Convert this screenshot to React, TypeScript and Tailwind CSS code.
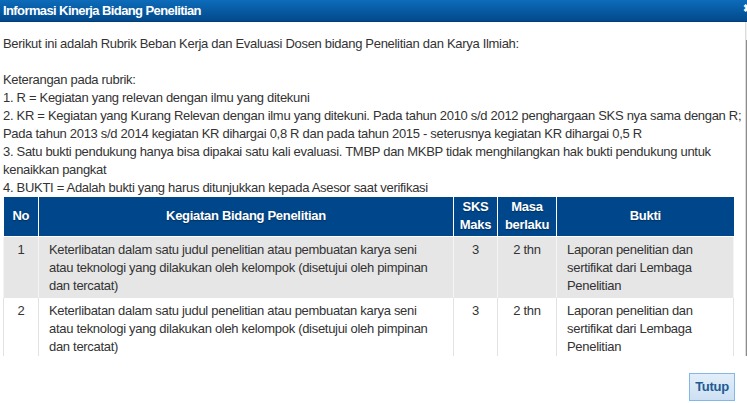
import React from "react";

const rows = [
  {
    no: "1",
    kegiatan:
      "Keterlibatan dalam satu judul penelitian atau pembuatan karya seni atau teknologi yang dilakukan oleh kelompok (disetujui oleh pimpinan dan tercatat)",
    sks: "3",
    masa: "2 thn",
    bukti: "Laporan penelitian dan sertifikat dari Lembaga Penelitian",
  },
  {
    no: "2",
    kegiatan:
      "Keterlibatan dalam satu judul penelitian atau pembuatan karya seni atau teknologi yang dilakukan oleh kelompok (disetujui oleh pimpinan dan tercatat)",
    sks: "3",
    masa: "2 thn",
    bukti: "Laporan penelitian dan sertifikat dari Lembaga Penelitian",
  },
];

export default function App() {
  return (
    <div className="w-[747px] h-[403px] overflow-hidden bg-white flex flex-col font-['Liberation_Sans',Arial,sans-serif] text-[13px] leading-[18px] tracking-[-0.3px] text-[#333]">
      {/* title bar */}
      <div className="h-[22px] shrink-0 flex items-center justify-between pl-[3px] bg-gradient-to-b from-[#0d6cba] to-[#03498c] border-b border-[#023d77]">
        <span className="font-bold text-white tracking-[-0.6px]">Informasi Kinerja Bidang Penelitian</span>
        <span className="text-white font-bold text-[11px] leading-none -mr-[5px] -mt-[4px]">✖</span>
      </div>

      {/* scrolling body */}
      <div className="h-[334px] shrink-0 flex">
        <div className="w-[745px] overflow-hidden pl-[3px] pt-[13px]">
          <div className="w-[742px]">
            <p>Berikut ini adalah Rubrik Beban Kerja dan Evaluasi Dosen bidang Penelitian dan Karya Ilmiah:</p>
            <br />
            <p>Keterangan pada rubrik:</p>
            <p>1. R = Kegiatan yang relevan dengan ilmu yang ditekuni</p>
            <p>
              2. KR = Kegiatan yang Kurang Relevan dengan ilmu yang ditekuni. Pada tahun 2010 s/d 2012 penghargaan SKS nya sama dengan R;
              <br />
              Pada tahun 2013 s/d 2014 kegiatan KR dihargai 0,8 R dan pada tahun 2015 - seterusnya kegiatan KR dihargai 0,5 R
            </p>
            <p>3. Satu bukti pendukung hanya bisa dipakai satu kali evaluasi. TMBP dan MKBP tidak menghilangkan hak bukti pendukung untuk kenaikkan pangkat</p>
            <p>4. BUKTI = Adalah bukti yang harus ditunjukkan kepada Asesor saat verifikasi</p>
          </div>

          <table className="w-[730px] table-fixed border-collapse">
            <colgroup>
              <col className="w-[35px]" />
              <col className="w-[415px]" />
              <col className="w-[44px]" />
              <col className="w-[59px]" />
              <col className="w-[177px]" />
            </colgroup>
            <thead>
              <tr className="bg-[#00468a] text-white font-bold [text-shadow:0_1px_1px_#00305f]">
                <th className="h-[39px] border border-white border-t-0 border-l-0 text-center">No</th>
                <th className="border border-white border-t-0 text-center">Kegiatan Bidang Penelitian</th>
                <th className="border border-white border-t-0 text-center">SKS<br />Maks</th>
                <th className="border border-white border-t-0 text-center">Masa<br />berlaku</th>
                <th className="border border-white border-t-0 border-r-0 text-center">Bukti</th>
              </tr>
            </thead>
            <tbody>
              {rows.map((r, i) => {
                const bg = i % 2 === 0 ? "bg-[#e6e6e6]" : "bg-white";
                const line = i % 2 === 0 ? "border-[#f4f4f4]" : "border-[#e2e2e2]";
                return (
                  <tr key={i} className={bg}>
                    <td className={`align-top text-center pt-[4px] pb-[3px] border-l border-r ${line}`}>{r.no}</td>
                    <td className={`align-top px-[10px] pt-[4px] pb-[3px] border-r ${line}`}>{r.kegiatan}</td>
                    <td className={`align-top text-center pt-[4px] pb-[3px] border-r ${line}`}>{r.sks}</td>
                    <td className={`align-top text-center pt-[4px] pb-[3px] border-r ${line}`}>{r.masa}</td>
                    <td className={`align-top px-[10px] pt-[4px] pb-[3px] border-r ${line}`}>{r.bukti}</td>
                  </tr>
                );
              })}
            </tbody>
          </table>
        </div>
        {/* scrollbar */}
        <div className="w-[2px] flex border-l border-[#dcdcdc]">
          <div className="w-[1px] flex flex-col">
            <div className="h-[18px] bg-[#f2f2f2]" />
            <div className="flex-1 bg-[#8c8c8c]" />
          </div>
        </div>
      </div>

      {/* footer */}
      <div className="flex-1 flex justify-end items-start pt-[17px] pr-[12px]">
        <button className="w-[46px] h-[28px] border border-[#83b7e6] bg-gradient-to-b from-[#e3eef9] to-[#cde0f3] text-[#1f5a94] font-bold text-[13px]">
          Tutup
        </button>
      </div>
    </div>
  );
}
